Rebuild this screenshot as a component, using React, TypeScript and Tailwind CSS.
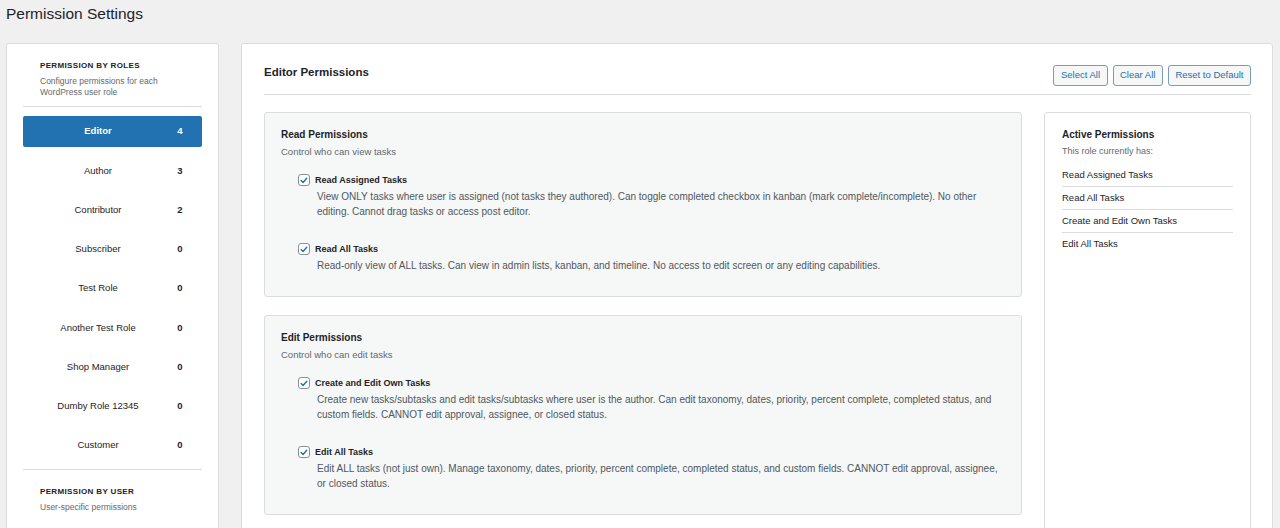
import React from "react";
import clsx from "clsx";

interface Role {
  name: string;
  count: number;
}

interface Permission {
  label: string;
  description: string;
}

interface PermissionGroup {
  title: string;
  subtitle: string;
  items: Permission[];
}

const roles: Role[] = [
  { name: "Editor", count: 4 },
  { name: "Author", count: 3 },
  { name: "Contributor", count: 2 },
  { name: "Subscriber", count: 0 },
  { name: "Test Role", count: 0 },
  { name: "Another Test Role", count: 0 },
  { name: "Shop Manager", count: 0 },
  { name: "Dumby Role 12345", count: 0 },
  { name: "Customer", count: 0 },
];

const groups: PermissionGroup[] = [
  {
    title: "Read Permissions",
    subtitle: "Control who can view tasks",
    items: [
      {
        label: "Read Assigned Tasks",
        description:
          "View ONLY tasks where user is assigned (not tasks they authored). Can toggle completed checkbox in kanban (mark complete/incomplete). No other editing. Cannot drag tasks or access post editor.",
      },
      {
        label: "Read All Tasks",
        description:
          "Read-only view of ALL tasks. Can view in admin lists, kanban, and timeline. No access to edit screen or any editing capabilities.",
      },
    ],
  },
  {
    title: "Edit Permissions",
    subtitle: "Control who can edit tasks",
    items: [
      {
        label: "Create and Edit Own Tasks",
        description:
          "Create new tasks/subtasks and edit tasks/subtasks where user is the author. Can edit taxonomy, dates, priority, percent complete, completed status, and custom fields. CANNOT edit approval, assignee, or closed status.",
      },
      {
        label: "Edit All Tasks",
        description:
          "Edit ALL tasks (not just own). Manage taxonomy, dates, priority, percent complete, completed status, and custom fields. CANNOT edit approval, assignee, or closed status.",
      },
    ],
  },
];

const activePermissions = [
  "Read Assigned Tasks",
  "Read All Tasks",
  "Create and Edit Own Tasks",
  "Edit All Tasks",
];

// WordPress style checked checkbox
const CheckBox: React.FC = () => (
  <span className="flex h-[12px] w-[12px] shrink-0 items-center justify-center rounded-[3px] border border-[#8c8f94] bg-white">
    <svg viewBox="0 0 12 12" className="h-[11px] w-[11px]">
      <path
        d="M2.6 6.1 L4.9 8.4 L9.3 3.4"
        fill="none"
        stroke="#2271b1"
        strokeWidth="1.7"
        strokeLinecap="round"
        strokeLinejoin="round"
      />
    </svg>
  </span>
);

const SidebarHeading: React.FC<{ title: string; text: string }> = ({ title, text }) => (
  <div className="pl-[17px] pt-[16px]">
    <h3 className="text-[8px] font-bold uppercase leading-[12px] tracking-[0.35px] text-[#1d2327]">
      {title}
    </h3>
    <p className="mt-[3.5px] w-[140px] text-[8.5px] leading-[11px] text-[#646970]">{text}</p>
  </div>
);

const Sidebar: React.FC = () => (
  <aside className="h-[520px] w-[213px] shrink-0 rounded-[3px] border border-[#dcdcde] bg-white px-[16px]">
    <SidebarHeading title="Permission by Roles" text="Configure permissions for each WordPress user role" />
    <div className="mt-[8.5px] border-t border-[#dcdcde]" />
    <ul className="mt-[9px] flex flex-col gap-[8.25px]">
      {roles.map((role, i) => (
        <li
          key={role.name}
          className={clsx(
            "flex h-[31px] items-center rounded-[2px] pl-[5px] pr-[10px] text-[9.5px]",
            i === 0 ? "bg-[#2271b1] font-bold text-white" : "text-[#1d2327]"
          )}
        >
          <span className="flex-1 text-center">{role.name}</span>
          <span className="w-6 text-center font-bold">{role.count}</span>
        </li>
      ))}
    </ul>
    <div className="mt-[8px] border-t border-[#dcdcde]" />
    <SidebarHeading title="Permission by User" text="User-specific permissions" />
  </aside>
);

const PermissionSection: React.FC<{ group: PermissionGroup }> = ({ group }) => (
  <section className="rounded-[3px] border border-[#dcdcde] bg-[#f6f7f7] px-[16px] pb-[23.5px] pt-[15px]">
    <h4 className="text-[10px] font-bold leading-[14px] text-[#1d2327]">{group.title}</h4>
    <p className="mt-[2.5px] text-[9.5px] leading-[13px] text-[#646970]">{group.subtitle}</p>
    <div className="flex flex-col gap-[24px] pl-[17px] pt-[16px]">
      {group.items.map((item) => (
        <div key={item.label}>
          <label className="flex items-center gap-[5px] text-[9px] font-bold leading-[13px] text-[#1d2327]">
            <CheckBox />
            {item.label}
          </label>
          <p className="ml-[19px] mt-[2px] text-[10px] leading-[15px] text-[#50575e]">
            {item.description}
          </p>
        </div>
      ))}
    </div>
  </section>
);

const ActivePanel: React.FC = () => (
  <div className="h-[440px] w-[207px] shrink-0 rounded-[3px] border border-[#dcdcde] bg-white px-[17px] pt-[15px]">
    <h4 className="text-[10px] font-bold leading-[14px] text-[#1d2327]">Active Permissions</h4>
    <p className="mt-[2.5px] text-[9px] leading-[13px] text-[#646970]">This role currently has:</p>
    <ul className="mt-[6px]">
      {activePermissions.map((p, i) => (
        <li
          key={p}
          className={clsx(
            "py-[5px] text-[9.5px] leading-[12px] text-[#1d2327]",
            i < activePermissions.length - 1 && "border-b border-[#dcdcde]"
          )}
        >
          {p}
        </li>
      ))}
    </ul>
  </div>
);

const ActionButton: React.FC<{ children: React.ReactNode }> = ({ children }) => (
  <button className="h-[21px] rounded-[3px] border border-[#7a9cba] bg-[#f6f7f7] px-[6.5px] text-[9.5px] text-[#2271b1]">
    {children}
  </button>
);

export default function App() {
  return (
    <div
      className="min-h-[528px] overflow-hidden bg-[#f0f0f1] pl-[6px] pr-[7px] pt-[4px] text-[#1d2327]"
      style={{ fontFamily: '"Liberation Sans", Arial, sans-serif' }}
    >
      <h1 className="text-[15.5px] leading-[20px] text-[#1d2327]">Permission Settings</h1>
      <div className="mt-[19px] flex gap-[22px]">
        <Sidebar />
        <main className="min-w-0 flex-1 rounded-[3px] border border-[#dcdcde] bg-white pl-[22px] pr-[21px] pt-[21px]">
          <div className="flex items-start justify-between border-b border-[#dcdcde] pb-[8px]">
            <h2 className="text-[11.5px] font-bold leading-[14px] text-[#1d2327]">Editor Permissions</h2>
            <div className="flex gap-[5px]">
              <ActionButton>Select All</ActionButton>
              <ActionButton>Clear All</ActionButton>
              <ActionButton>Reset to Default</ActionButton>
            </div>
          </div>
          <div className="mt-[17px] flex items-start gap-[22px]">
            <div className="flex min-w-0 flex-1 flex-col gap-[18px]">
              {groups.map((g) => (
                <PermissionSection key={g.title} group={g} />
              ))}
            </div>
            <ActivePanel />
          </div>
        </main>
      </div>
    </div>
  );
}
